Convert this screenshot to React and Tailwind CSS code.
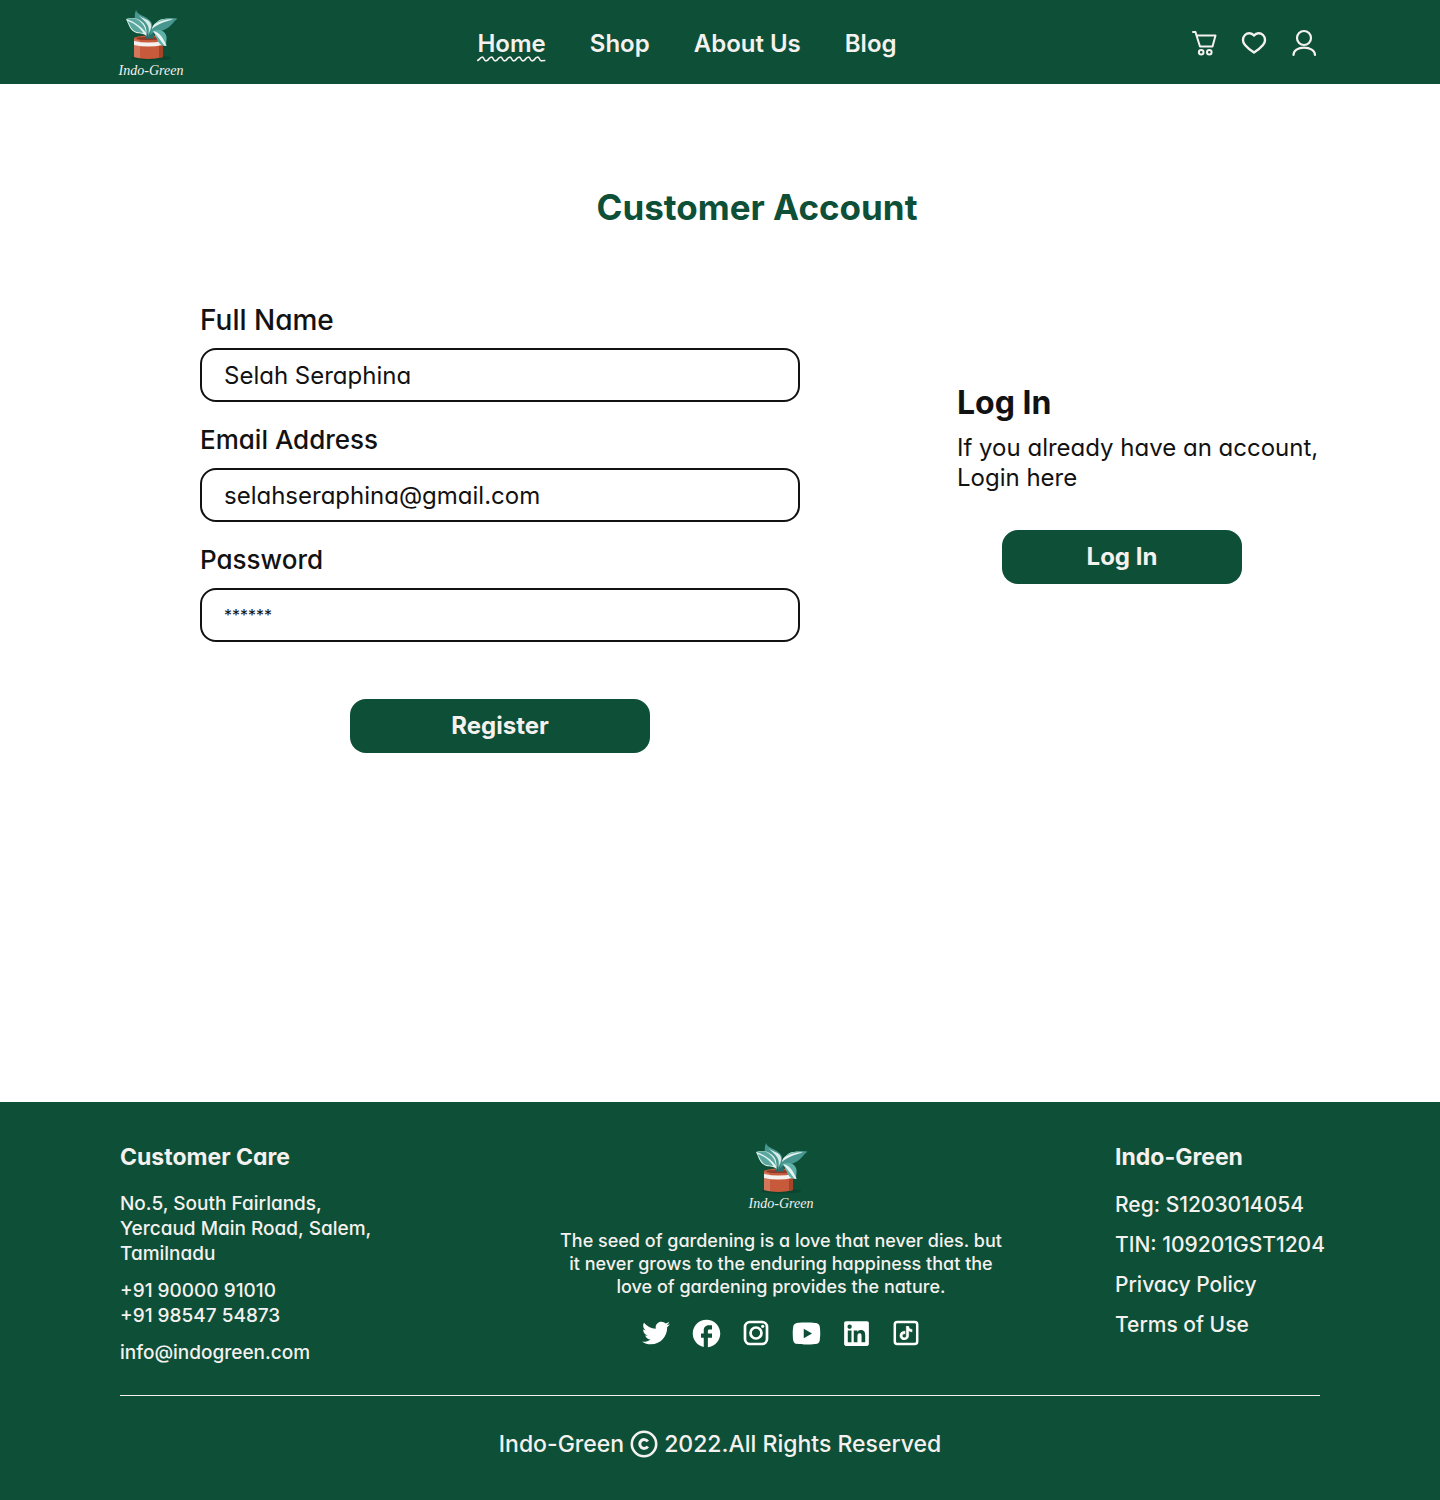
import React from "react";
import { FaTwitter } from "react-icons/fa";
import { MdFacebook } from "react-icons/md";
import { RiYoutubeFill, RiLinkedinBoxFill } from "react-icons/ri";
import { SiTiktok } from "react-icons/si";

function Logo() {
  return (
    <svg viewBox="0 0 66 74" width="66" height="74" role="img" aria-label="Indo-Green" className="block shrink-0 overflow-visible">
      <ellipse cx="33" cy="49" rx="20" ry="2.5" fill="#0b4530" />
      <path d="M16 29v19q14 4 29 0V29z" fill="#c65a3a" />
      <path d="M16 29v19l6 1.3V29z" fill="#d2775a" />
      <path d="M41 30v19l4-1V29z" fill="#a64429" />
      <ellipse cx="30.5" cy="29.3" rx="14.5" ry="2.7" fill="#c65a3a" />
      <ellipse cx="30.5" cy="29.5" rx="12" ry="1.6" fill="#8d3b2a" />
      <path d="M16 32q14 3 29 0v4q-15 3-29 0z" fill="#f5f1ef" />
      <path d="M28 29.500 27 21l4-4 4 1 1 11.500z" fill="#27706c" />
      <path d="M32 26C33 18 38 12 44 10.500 49 9 54 9 59.500 9.500 55 13 53 18 46 21c-6 2-10 1-14 5z" fill="#47968f" />
      <path d="M34 20C38 16 45 13 55 10.500 47 9 42 10 39 13c-3 2-5 4-5 7z" fill="#e4f3ef" />
      <path d="M36 16C40 10.500 46 9 59 9.500 49 10 41 12 36 16z" fill="#6fb5ad" />
      <path d="M18 1c1 4 6 5 9 7 5 3 8 5 7 11-1 4-3 5-3 9-2-6-6-9-10-12C16 12 16 6 18 1z" fill="#47968f" />
      <path d="M19 4c3 5 9 8 11 13 1 3 1 5 .5 8C34 19 34 15 31 12 27 9 22 9 19 4z" fill="#d4ebe6" />
      <path d="M8 10c6-2 11-1 15 2s6 6 5.500 15c-3-3-6-2-10-3C12 22 11 16 8 10z" fill="#e4f3ef" />
      <path d="M8.500 10c6-1.500 10-.5 13 2 4 3 6 7 6.500 12C24 18 17 13 8.500 10z" fill="#5aa79f" />
      <path d="M9.500 12c6 2 11 5 16 12-3-.5-5-.5-7-1-5-2-6-6-9-11z" fill="#5aa79f" />
      <path d="M34 22c7-2 12-1 14 4 1.500 4-.5 7 .5 11-5 0-7-2-9-6-2-5-2-6-5.500-9z" fill="#5fb0a8" />
      <path d="M35 22c6 1 10 6 13.500 15-4-.5-6-3-7-6-5-3-4-7-6.500-9z" fill="#e9f5f2" />
      <path d="M35 23c4 3 7 8 11 13-3 0-5-2-6.500-5-2-5-2-5-4.500-8z" fill="#5fb0a8" />
      <text x="33" y="66" textAnchor="middle" fill="#f5f1ef" fontSize="14" className="font-['Liberation_Serif',serif] italic">
        Indo-Green
      </text>
    </svg>
  );
}

const links = ["Home", "Shop", "About Us", "Blog"];

function Header() {
  return (
    <header className="flex h-[84px] items-center justify-between bg-[#0d4f37] pt-1 pr-[120px] pl-[118px] text-[#f4f1ef]">
      <a href="#home" className="mt-1 block">
        <Logo />
      </a>
      <nav className="flex gap-11 text-[24px] leading-[30px] font-semibold">
        {links.map((label, i) => (
          <a key={label} href={"#" + label} className="relative">
            {label}
            {i === 0 && (
              <svg viewBox="0 0 68 6" preserveAspectRatio="none" className="absolute inset-x-0 top-[27px] h-[6px] w-full" aria-hidden="true">
                <path
                  d="M0 4.500Q1.500 4.500 2.500 3T4.800 1.200 7 3 9.300 4.800 11.600 3 13.900 1.200 16.200 3 18.500 4.800 20.800 3 23.100 1.200 25.400 3 27.700 4.800 30 3 32.300 1.200 34.600 3 36.900 4.800 39.200 3 41.500 1.200 43.800 3 46.100 4.800 48.400 3 50.700 1.200 53 3 55.300 4.800 57.600 3 59.900 1.200 62.200 3 64.500 4.800 68 4.500"
                  fill="none"
                  stroke="currentColor"
                  strokeWidth="1.6"
                />
              </svg>
            )}
          </a>
        ))}
      </nav>
      <div className="flex gap-5">
        <a href="#cart" aria-label="Cart">
          <svg viewBox="0 1 30 30" width="30" height="30" fill="none" stroke="currentColor" strokeWidth="2" strokeLinejoin="round" strokeLinecap="round" className="block">
            <path d="M3 4h2.500L6.500 7.500M6.500 7.500 10 18.500h12.500l3-11z" />
            <circle cx="11.200" cy="24.200" r="2.300" />
            <circle cx="19.300" cy="24.200" r="2.300" />
          </svg>
        </a>
        <a href="#wishlist" aria-label="Wishlist">
          <svg viewBox="1 1 30 30" width="30" height="30" fill="none" stroke="currentColor" strokeWidth="2.4" strokeLinejoin="round" className="block">
            <path d="M15 7.500C12.500 4.500 8.500 4.500 6 7c-2.700 2.700-2.700 7 0 10 2.500 3 5.500 5.200 9 7.500 3.500-2.300 6.500-4.500 9-7.500 2.700-3 2.700-7.300 0-10-2.500-2.500-6.500-2.500-9 .5z" />
          </svg>
        </a>
        <a href="#profile" aria-label="Profile">
          <svg viewBox="0 0 30 30" width="30" height="30" fill="none" stroke="currentColor" strokeWidth="2.2" strokeLinecap="round" className="block">
            <circle cx="14" cy="9" r="7" />
            <path d="M3.500 26C3.500 21.500 8 18.700 14 18.700S25 21.500 25 26" />
          </svg>
        </a>
      </div>
    </header>
  );
}

function Field({ id, label, type, value, labelClass = "text-[26px]", inputClass = "text-[24px]" }) {
  return (
    <div className="flex flex-col gap-2.5">
      <label htmlFor={id} className={labelClass + " leading-9 font-medium"}>
        {label}
      </label>
      <input
        id={id}
        type={type}
        defaultValue={value}
        className={inputClass + " h-[54px] w-full rounded-2xl border-2 border-[#121212] bg-white px-[22px] outline-none"}
      />
    </div>
  );
}

function Main() {
  return (
    <main className="grow pt-[101px] pr-[126px] pb-[348px] pl-[200px] text-[#121212]">
      <h1 className="text-center text-[35px] leading-[45px] font-bold text-[#0d4f37]">Customer Account</h1>
      <div className="mt-[72px] flex items-start justify-between">
        <form className="flex w-[600px] flex-col gap-5">
          <Field id="name" label="Full Name" type="text" value="Selah Seraphina" labelClass="text-[28px]" />
          <Field id="email" label="Email Address" type="email" value="selahseraphina@gmail.com" />
          <Field id="password" label="Password" type="text" value="******" inputClass="text-[16px]" />
          <button type="button" className="mt-[37px] h-[54px] w-[300px] self-center rounded-2xl bg-[#0d4f37] text-[24px] font-bold text-[#f4f1ef]">
            Register
          </button>
        </form>
        <section className="mt-[81px] w-[357px]">
          <h2 className="text-[32px] leading-10 font-bold">Log In</h2>
          <p className="mt-2.5 text-[24px] leading-[30px] whitespace-nowrap">
            If you already have an account,
            <br />
            Login here
          </p>
          <button type="button" className="mt-[37px] ml-[45px] h-[54px] w-60 rounded-2xl bg-[#0d4f37] text-[24px] font-bold text-[#f4f1ef]">
            Log In
          </button>
        </section>
      </div>
    </main>
  );
}

function Socials() {
  const cell = "flex size-[30px] items-center justify-center";
  return (
    <div className="mt-5 flex gap-5 text-white">
      <a href="#twitter" aria-label="Twitter" className={cell}><FaTwitter size={28} /></a>
      <a href="#facebook" aria-label="Facebook" className={cell}><MdFacebook size={33} className="shrink-0" /></a>
      <a href="#instagram" aria-label="Instagram" className={cell}>
        <svg viewBox="0 0 30 30" width="30" height="30" fill="none" stroke="currentColor" strokeWidth="2.7">
          <rect x="4" y="4" width="22" height="22" rx="5" />
          <circle cx="15" cy="15" r="5.500" />
          <circle cx="21.700" cy="8.300" r="1.600" fill="currentColor" stroke="none" />
        </svg>
      </a>
      <a href="#youtube" aria-label="YouTube" className={cell}><RiYoutubeFill size={33} className="shrink-0" /></a>
      <a href="#linkedin" aria-label="LinkedIn" className={cell}><RiLinkedinBoxFill size={33} className="shrink-0" /></a>
      <a href="#tiktok" aria-label="TikTok" className={cell}>
        <svg viewBox="0 0 30 30" width="30" height="30" fill="none" stroke="currentColor" strokeWidth="2.5">
          <rect x="3.800" y="4" width="22.400" height="22" rx="2.500" />
          <SiTiktok x="8" y="8" size={14} strokeWidth="0.8" />
        </svg>
      </a>
    </div>
  );
}

function Footer() {
  return (
    <footer className="bg-[#0d4f37] px-[120px] pt-10 pb-[41px] text-[#f4f1ef]">
      <div className="flex items-start justify-between border-b border-[#f4f1ef] pb-[30px]">
        <section className="w-[327px] text-[19px] leading-[25px] font-medium">
          <h2 className="text-[23px] leading-[30px] font-bold">Customer Care</h2>
          <address className="mt-[19px] not-italic">
            No.5, South Fairlands,
            <br />
            Yercaud Main Road, Salem,
            <br />
            Tamilnadu
          </address>
          <p className="mt-3">
            +91 90000 91010
            <br />
            +91 98547 54873
          </p>
          <p className="mt-3">
            <a href="mailto:info@indogreen.com">info@indogreen.com</a>
          </p>
        </section>
        <section className="flex w-[440px] flex-col items-center">
          <Logo />
          <p className="mt-[13px] text-center text-[18px] leading-[23px] font-medium whitespace-nowrap">
            The seed of gardening is a love that never dies. but
            <br />
            it never grows to the enduring happiness that the
            <br />
            love of gardening provides the nature.
          </p>
          <Socials />
        </section>
        <section className="w-[205px] text-[21px] leading-[30px] font-medium whitespace-nowrap">
          <h2 className="text-[23px] leading-[30px] font-bold">Indo-Green</h2>
          <ul className="mt-[18px] flex flex-col gap-2.5">
            <li>Reg: S1203014054</li>
            <li>TIN: 109201GST1204</li>
            <li><a href="#privacy">Privacy Policy</a></li>
            <li><a href="#terms">Terms of Use</a></li>
          </ul>
        </section>
      </div>
      <p className="mt-[33px] flex items-center justify-center gap-1.5 text-[23px] leading-[30px] font-medium">
        <span>Indo-Green</span>
        <svg viewBox="0 0 28 28" width="28" height="28" fill="none" stroke="currentColor" strokeWidth="2.6" aria-label="copyright" role="img">
          <circle cx="14" cy="14" r="12.200" />
          <path d="M17.800 11.500A4.400 4.400 0 1 0 17.800 16.500" strokeWidth="3" />
        </svg>
        <span>2022.All Rights Reserved</span>
      </p>
    </footer>
  );
}

export default function App() {
  return (
    <div className="flex min-h-screen flex-col bg-white font-['Inter','Open_Sans',sans-serif] [font-feature-settings:'cv11']">
      <Header />
      <Main />
      <Footer />
    </div>
  );
}
